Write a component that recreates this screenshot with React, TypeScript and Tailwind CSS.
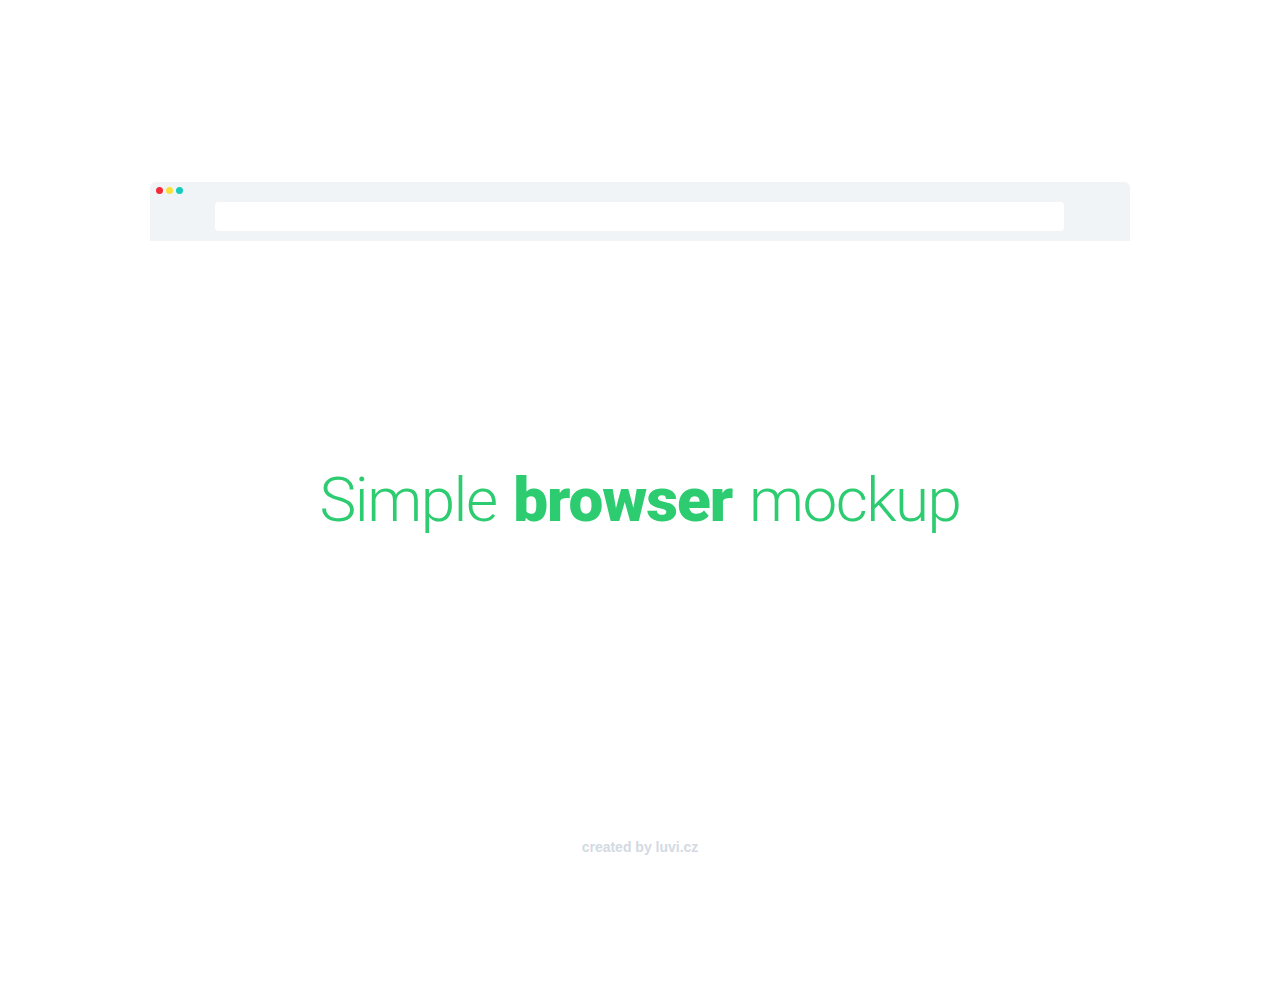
export default function App() {
    return (
        <div className="flex h-[1000px] w-full flex-col items-center bg-white font-['Roboto',sans-serif]">
            <div className="mt-[182px] flex h-[59px] w-[980px] rounded-t-[6px] bg-[#f1f4f7]">
                <div className="flex gap-[3px] pl-[6px] pt-[5px]">
                    <span className="h-[7px] w-[7px] rounded-full bg-[#f22b3b]" />
                    <span className="h-[7px] w-[7px] rounded-full bg-[#f8df3a]" />
                    <span className="h-[7px] w-[7px] rounded-full bg-[#14cbbd]" />
                </div>
                <div className="ml-[32px] mt-[20px] h-[29px] w-[849px] rounded-[4px] bg-white" />
            </div>

            <h1 className="mt-[222px] text-[62px] leading-[74px] font-light tracking-[-1.5px] text-[#2ecc71] [word-spacing:3px]">
                Simple <span className="font-black tracking-[-1px]">browser</span> mockup
            </h1>

            <p className="mt-[300px] font-['Liberation_Sans',sans-serif] text-[14px] font-bold text-[#d3dae3]">
                created by luvi.cz
            </p>
        </div>
    );
}
